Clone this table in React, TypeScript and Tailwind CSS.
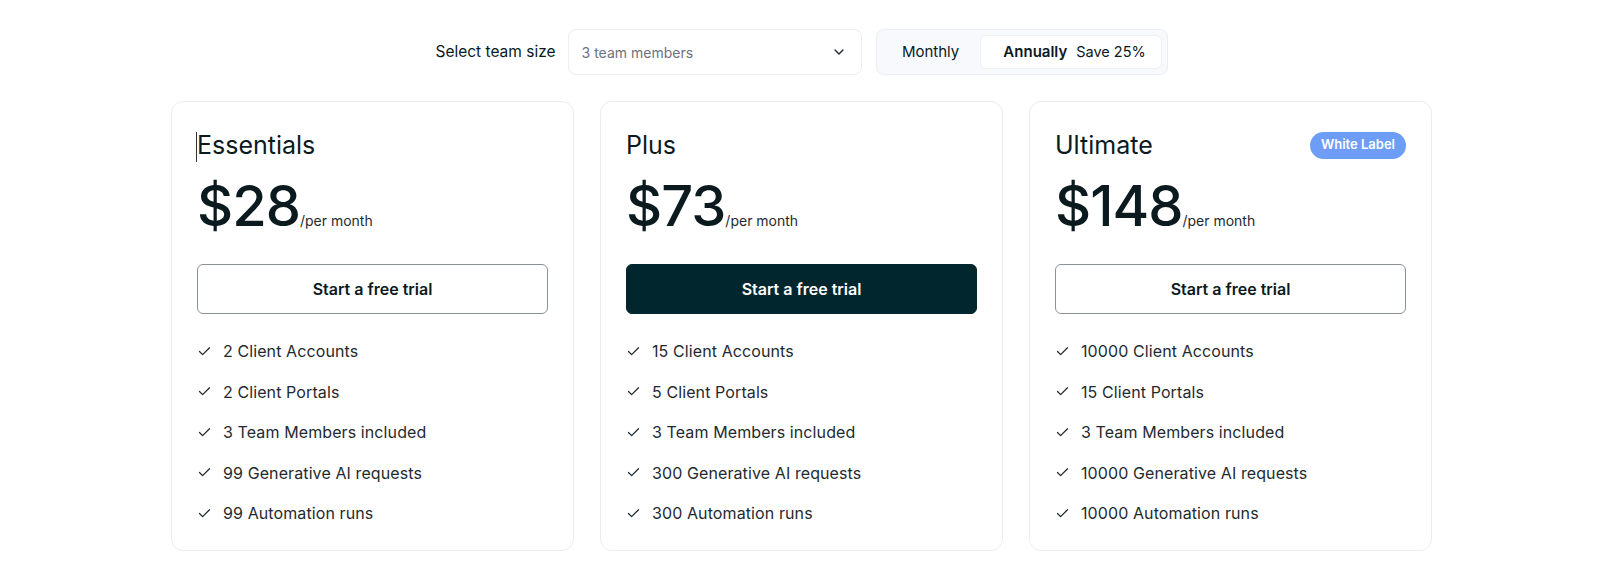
import React from 'react';
import { Check, ChevronDown } from 'lucide-react';

type Plan = {
  name: string;
  price: string;
  featured?: boolean;
  badge?: string;
  caret?: boolean;
  features: string[];
};

const plans: Plan[] = [
  {
    name: 'Essentials',
    price: '$28',
    caret: true,
    features: [
      '2 Client Accounts',
      '2 Client Portals',
      '3 Team Members included',
      '99 Generative AI requests',
      '99 Automation runs',
    ],
  },
  {
    name: 'Plus',
    price: '$73',
    featured: true,
    features: [
      '15 Client Accounts',
      '5 Client Portals',
      '3 Team Members included',
      '300 Generative AI requests',
      '300 Automation runs',
    ],
  },
  {
    name: 'Ultimate',
    price: '$148',
    badge: 'White Label',
    features: [
      '10000 Client Accounts',
      '15 Client Portals',
      '3 Team Members included',
      '10000 Generative AI requests',
      '10000 Automation runs',
    ],
  },
];

const PlanCard: React.FC<{ plan: Plan }> = ({ plan }) => {
  return (
    <div className="rounded-xl border border-[#ebedf3] bg-white px-[25px] pt-[27px] pb-[25px]">
      {/* Title row */}
      <div className="flex h-[32px] items-center justify-between">
        <h3 className="relative text-[25px] leading-[32px] font-normal text-[#0b1a1e]">
          {plan.caret && (
            <span className="absolute -left-px top-[3px] h-[30px] w-px bg-[#333]"></span>
          )}
          {plan.name}
        </h3>
        {plan.badge && (
          <span className="flex h-[27px] items-center rounded-full bg-[#6e9df7] px-[11px] text-[13px] font-semibold text-white">
            {plan.badge}
          </span>
        )}
      </div>

      {/* Price */}
      <div className="mt-[17px] flex items-baseline">
        <span className="text-[56px] leading-[56px] font-medium tracking-[-1px] text-[#0b1a1e]">
          {plan.price}
        </span>
        <span className="text-[14px] text-[#1f2a30]">/per month</span>
      </div>

      {/* CTA */}
      <button
        className={
          plan.featured
            ? 'mt-[30px] flex h-[50px] w-full items-center justify-center rounded-md border border-[#02262e] bg-[#02262e] text-[16px] font-semibold text-white'
            : 'mt-[30px] flex h-[50px] w-full items-center justify-center rounded-md border border-[#8c9196] bg-white text-[16px] font-semibold text-[#0b1a1e]'
        }
      >
        Start a free trial
      </button>

      {/* Features */}
      <ul className="mt-[25px] flex flex-col gap-[16.5px]">
        {plan.features.map((f) => (
          <li key={f} className="flex h-[24px] items-center gap-[11px] text-[16px] tracking-[0.1px] text-[#1f2a30]">
            <Check size={15} strokeWidth={2} className="text-[#1f2a30]" />
            <span>{f}</span>
          </li>
        ))}
      </ul>
    </div>
  );
};

export default function App() {
  return (
    <div
      className="min-h-[564px] w-full bg-white pt-[29px]"
      style={{ fontFamily: 'Inter, "Noto Sans", sans-serif' }}
    >
      {/* Controls */}
      <div className="flex items-center justify-center pl-[3px]">
        <span className="mr-[12px] text-[15.5px] text-[#0b1a1e]">Select team size</span>
        <div className="flex h-[46px] w-[294px] items-center justify-between rounded-lg border border-[#eceef3] bg-white pl-[13px] pr-[14px]">
          <span className="text-[14px] text-[#6b7280]">3 team members</span>
          <ChevronDown size={16} strokeWidth={2} className="text-[#1f2a30]" />
        </div>
        <div className="ml-[14px] flex h-[46px] w-[292px] items-center rounded-lg border border-[#eceef3] bg-[#f8f9fc] p-[5px]">
          <span className="flex w-[98px] justify-center text-[15px] text-[#0b1a1e]">Monthly</span>
          <div className="flex h-[34px] flex-1 items-center justify-center gap-[9px] rounded-md border border-[#eef0f4] bg-white">
            <span className="ml-[8px] text-[15px] font-semibold text-[#0b1a1e]">Annually</span>
            <span className="text-[14.5px] text-[#0b1a1e]">Save 25%</span>
          </div>
        </div>
      </div>

      {/* Plans */}
      <div className="mt-[26px] flex justify-center pl-[3px]">
        <div className="grid w-[1261px] grid-cols-3 gap-[26px]">
          {plans.map((p) => (
            <PlanCard key={p.name} plan={p} />
          ))}
        </div>
      </div>
    </div>
  );
}
